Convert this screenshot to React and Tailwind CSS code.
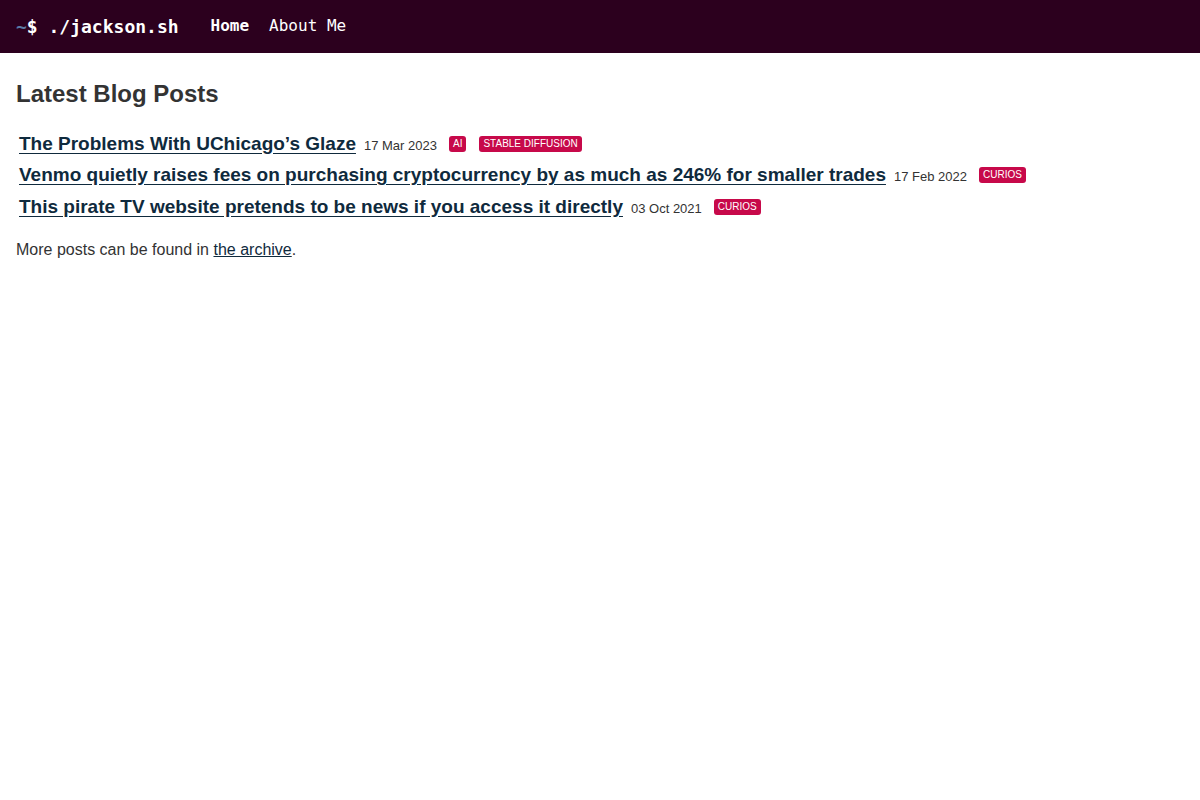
export default function App() {
  const posts = [
    {
      title: "The Problems With UChicago’s Glaze",
      date: "17 Mar 2023",
      tags: ["AI", "Stable Diffusion"],
    },
    {
      title: "Venmo quietly raises fees on purchasing cryptocurrency by as much as 246% for smaller trades",
      date: "17 Feb 2022",
      tags: ["Curios"],
    },
    {
      title: "This pirate TV website pretends to be news if you access it directly",
      date: "03 Oct 2021",
      tags: ["Curios"],
    },
  ];

  return (
    <div className="min-h-screen bg-white text-[#333] font-['Liberation_Sans',Arial,sans-serif]">
      <header className="h-[53px] bg-[#2c001e] flex items-center px-4 font-['DejaVu_Sans_Mono',monospace]">
        <a href="#" className="text-[18px] font-bold text-white">
          <span className="text-[#5b7aa6]">~</span>$ ./jackson.sh
        </a>
        <nav className="flex gap-5 ml-8 text-[16px] text-white pb-[2px]">
          <a href="#" className="font-bold">Home</a>
          <a href="#">About Me</a>
        </nav>
      </header>

      <main className="px-4 pt-[23px]">
        <h1 className="text-[24px] font-bold text-[#333]">Latest Blog Posts</h1>
        <ul className="mt-[16px] pl-[3px] flex flex-col">
          {posts.map((p, i) => (
            <li key={p.title} className={`flex items-center ${i === 1 ? "h-[32px]" : "h-[31px]"}`}>
              <a href="#" className="text-[19px] leading-[22px] font-bold text-[#0f2a3d] underline underline-offset-[3px]">
                {p.title}
              </a>
              <span className="text-[13px] leading-[15px] ml-2 mt-[3px] text-[#333]">{p.date}</span>
              <span className="flex gap-[13px] ml-3">
                {p.tags.map((t) => (
                  <span
                    key={t}
                    className="bg-[#c7094a] text-white text-[10px] uppercase rounded-[3px] px-[4px] py-[1px] leading-[14px]"
                  >
                    {t}
                  </span>
                ))}
              </span>
            </li>
          ))}
        </ul>
        <p className="mt-[16px] text-[16px]">
          More posts can be found in{" "}
          <a href="#" className="underline text-[#0f2a3d]">the archive</a>.
        </p>
      </main>
    </div>
  );
}
